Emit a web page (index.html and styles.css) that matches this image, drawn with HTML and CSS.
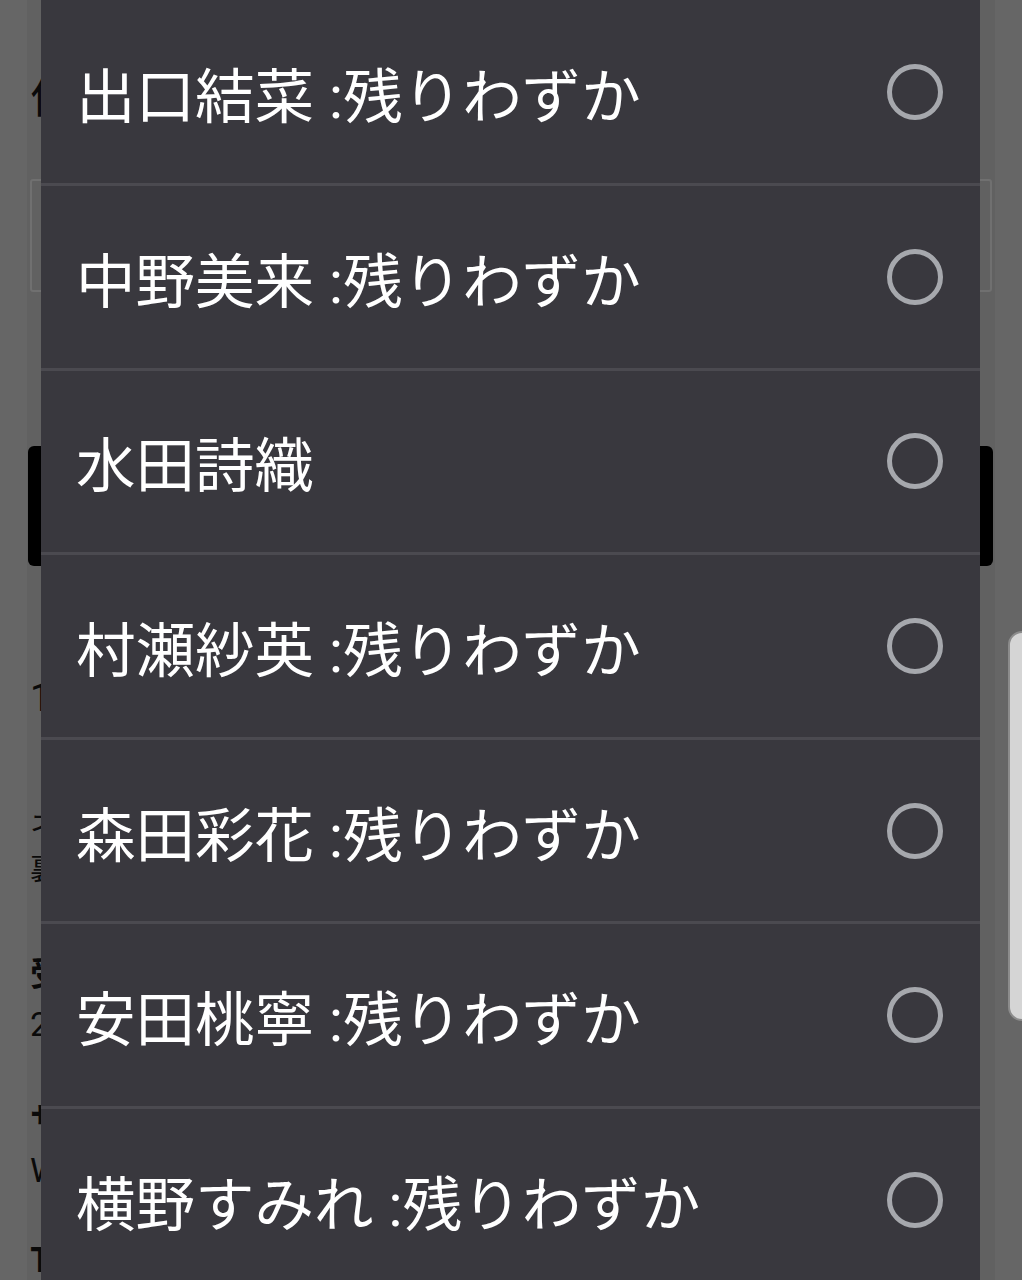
FILE: index.html
```html
<!DOCTYPE html>
<html lang="ja">
<head>
<meta charset="utf-8">
<title>選択</title>
<link rel="stylesheet" href="styles.css">
</head>
<body>
<main class="page">
  <h1 class="title">作品</h1>
  <div class="field"></div>
  <div class="button-bar"></div>
  <p class="qty">1</p>
  <p class="note">ネ</p>
  <p class="note small">裏</p>
  <p class="label">受</p>
  <p class="value">2</p>
  <p class="label second">サ</p>
  <p class="value">W</p>
  <p class="label third">T</p>
</main>

<div class="overlay">
  <ul class="sheet">
    <li class="row"><span class="name">出口結菜 :残りわずか</span><span class="radio"></span></li>
    <li class="row"><span class="name">中野美来 :残りわずか</span><span class="radio"></span></li>
    <li class="row"><span class="name">水田詩織</span><span class="radio"></span></li>
    <li class="row"><span class="name">村瀬紗英 :残りわずか</span><span class="radio"></span></li>
    <li class="row"><span class="name">森田彩花 :残りわずか</span><span class="radio"></span></li>
    <li class="row"><span class="name">安田桃寧 :残りわずか</span><span class="radio"></span></li>
    <li class="row"><span class="name">横野すみれ :残りわずか</span><span class="radio"></span></li>
  </ul>
</div>

<div class="side-tab"></div>
</body>
</html>
```

FILE: styles.css
```css
html, body {
  margin: 0;
  padding: 0;
}

body {
  background: #666666;
  width: 1022px;
  height: 1280px;
  overflow: hidden;
  font-family: "Noto Sans CJK JP", "Noto Sans", sans-serif;
  color: #0a0a0a;
}

.page {
  margin-left: 27px;
  width: 968px;
  height: 1280px;
  background: #616161;
  padding: 0 0 0 3px;
  box-sizing: border-box;
  display: flex;
  flex-direction: column;
  align-items: flex-start;
}

.title {
  margin: 62px 0 0 0;
  font-size: 44px;
  font-weight: 400;
  line-height: 64px;
}

.field {
  margin-top: 53px;
  width: 962px;
  height: 115px;
  box-sizing: border-box;
  border: 2px solid #707070;
  border-radius: 3px;
}

.button-bar {
  margin-top: 154px;
  margin-left: -2px;
  width: 965px;
  height: 122px;
  background: #000;
  border-radius: 6px;
}

.qty {
  margin: 110px 0 0 0;
  font-family: "Roboto", "Noto Sans CJK JP", sans-serif;
  font-size: 38px;
  line-height: 44px;
}

.note {
  margin: 82px 0 0 0;
  font-size: 30px;
  line-height: 40px;
}

.note.small {
  margin-top: 4px;
}

.label {
  margin: 64px 0 0 0;
  font-size: 34px;
  font-weight: 700;
  line-height: 44px;
}

.label.second {
  margin-top: 50px;
}

.label.third {
  margin-top: 44px;
}

.value {
  margin: 8px 0 0 0;
  font-family: "Roboto", "Noto Sans CJK JP", sans-serif;
  font-size: 34px;
  line-height: 44px;
}

.overlay {
  position: fixed;
  top: 0;
  left: 41px;
  width: 939px;
  height: 1280px;
}

.sheet {
  list-style: none;
  margin: 0;
  padding: 1.5px 0 0 0;
  height: 1300px;
  background: #39383e;
}

.row {
  height: 184.6px;
  box-sizing: border-box;
  border-bottom: 3px solid #4b4a50;
  display: flex;
  align-items: center;
  justify-content: space-between;
  padding: 0 37px 0 35px;
}

.name {
  color: #ffffff;
  font-family: "Roboto", "Noto Sans CJK JP", "Noto Sans", sans-serif;
  font-size: 59.5px;
  font-weight: 400;
  white-space: nowrap;
}

.radio {
  width: 56px;
  height: 56px;
  box-sizing: border-box;
  border: 5px solid #a6a8ad;
  border-radius: 50%;
  flex: none;
}

.side-tab {
  position: fixed;
  top: 631px;
  left: 1008px;
  width: 30px;
  height: 390px;
  box-sizing: border-box;
  background: #d5d5d5;
  border: 2px solid #8c8c8c;
  border-radius: 14px;
}
```
